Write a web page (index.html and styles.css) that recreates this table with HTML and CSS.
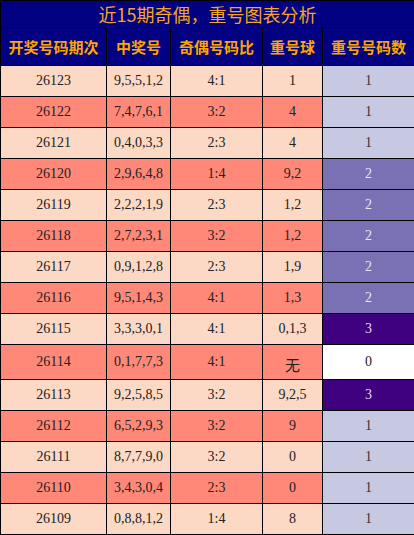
FILE: index.html
```html
<!DOCTYPE html>
<html>
<head lang="zh">
    <meta charset="UTF-8">
    <link rel="stylesheet" href="styles.css">
    <title>重号图表分析</title>
</head>
<body>
<table class="chart">
    <colgroup>
        <col class="c1"><col class="c2"><col class="c3"><col class="c4"><col class="c5">
    </colgroup>
    <tr class="title"><td colspan="5">近15期奇偶，重号图表分析</td></tr>
    <tr class="head">
        <th>开奖号码期次</th>
        <th>中奖号</th>
        <th>奇偶号码比</th>
        <th>重号球</th>
        <th>重号号码数</th>
    </tr>
    <tr class="light"><td>26123</td><td>9,5,5,1,2</td><td>4:1</td><td>1</td><td class="n1">1</td></tr>
    <tr class="dark"><td>26122</td><td>7,4,7,6,1</td><td>3:2</td><td>4</td><td class="n1">1</td></tr>
    <tr class="light"><td>26121</td><td>0,4,0,3,3</td><td>2:3</td><td>4</td><td class="n1">1</td></tr>
    <tr class="dark"><td>26120</td><td>2,9,6,4,8</td><td>1:4</td><td>9,2</td><td class="n2">2</td></tr>
    <tr class="light"><td>26119</td><td>2,2,2,1,9</td><td>2:3</td><td>1,2</td><td class="n2">2</td></tr>
    <tr class="dark"><td>26118</td><td>2,7,2,3,1</td><td>3:2</td><td>1,2</td><td class="n2">2</td></tr>
    <tr class="light"><td>26117</td><td>0,9,1,2,8</td><td>2:3</td><td>1,9</td><td class="n2">2</td></tr>
    <tr class="dark"><td>26116</td><td>9,5,1,4,3</td><td>4:1</td><td>1,3</td><td class="n2">2</td></tr>
    <tr class="light"><td>26115</td><td>3,3,3,0,1</td><td>4:1</td><td>0,1,3</td><td class="n3">3</td></tr>
    <tr class="dark"><td>26114</td><td>0,1,7,7,3</td><td>4:1</td><td class="none">无</td><td class="n0">0</td></tr>
    <tr class="light"><td>26113</td><td>9,2,5,8,5</td><td>3:2</td><td>9,2,5</td><td class="n3">3</td></tr>
    <tr class="dark"><td>26112</td><td>6,5,2,9,3</td><td>3:2</td><td>9</td><td class="n1">1</td></tr>
    <tr class="light"><td>26111</td><td>8,7,7,9,0</td><td>3:2</td><td>0</td><td class="n1">1</td></tr>
    <tr class="dark"><td>26110</td><td>3,4,3,0,4</td><td>2:3</td><td>0</td><td class="n1">1</td></tr>
    <tr class="light"><td>26109</td><td>0,8,8,1,2</td><td>1:4</td><td>8</td><td class="n1">1</td></tr>
</table>
</body>
</html>
```

FILE: styles.css
```css
body {
    margin: 0;
    font-family: "Liberation Serif", "Noto Sans CJK SC", serif;
}
.chart {
    width: 414px;
    border-collapse: collapse;
    table-layout: fixed;
    border: 1px solid #000;
}
.c1 { width: 106px; }
.c2 { width: 64px; }
.c3 { width: 92px; }
.c4 { width: 60px; }
.c5 { width: 92px; }
.chart td, .chart th {
    border: 1px solid #000;
    padding: 0;
    text-align: center;
}
.title td {
    height: 26px;
    background: #000080;
    color: #f5a623;
    font-family: "Noto Sans CJK SC", sans-serif;
    font-size: 18px;
    line-height: 26px;
}
.head th {
    height: 37px;
    background: #000080;
    color: #ffa500;
    font-family: "Noto Sans CJK SC", sans-serif;
    font-size: 15px;
    font-weight: bold;
}
.light td, .dark td {
    height: 30px;
    font-size: 14px;
    color: #222;
}
.light td { background: #fcd9c5; }
.dark td { background: #ff8878; }
.chart td.none {
    font-family: "Noto Sans CJK SC", sans-serif;
    font-size: 15px;
    padding-top: 4px;
}
.chart td.n0 { background: #fff; color: #222; }
.chart td.n1 { background: #c7c9e3; color: #333; }
.chart td.n2 { background: #7a70b4; color: #e8e8f0; }
.chart td.n3 { background: #3e007f; color: #e0d8f0; }
```
